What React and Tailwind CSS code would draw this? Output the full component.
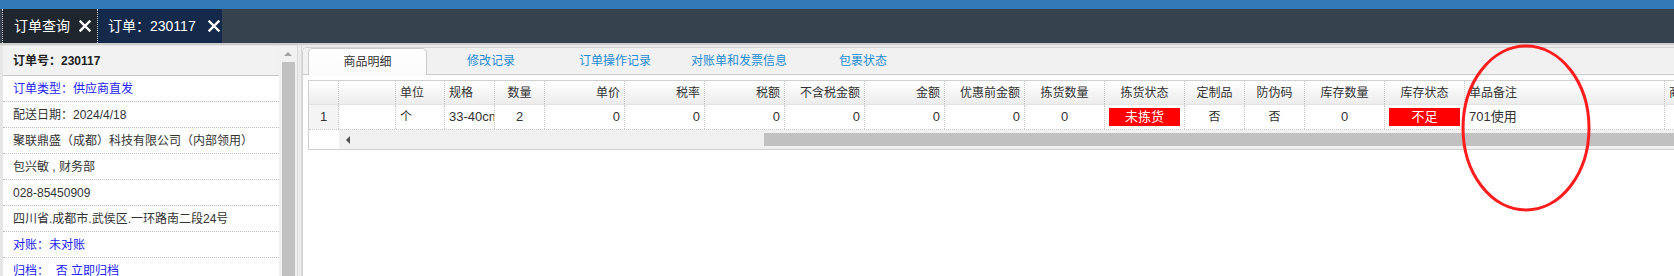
import React from 'react';

const font = { fontFamily: '"Liberation Sans", "Noto Sans CJK SC", sans-serif' };

// width, header, value, align
const cols = [
    { w: 'w-[30px]', h: '', v: '1', a: 'justify-center', num: true },
    { w: 'w-[57px]', h: '', v: '', a: 'justify-start' },
    { w: 'w-[49px]', h: '单位', v: '个', a: 'justify-start' },
    { w: 'w-[50px]', h: '规格', v: '33-40cm', a: 'justify-start' },
    { w: 'w-[50px]', h: '数量', v: '2', a: 'justify-center' },
    { w: 'w-[80px]', h: '单价', v: '0', a: 'justify-end' },
    { w: 'w-[80px]', h: '税率', v: '0', a: 'justify-end' },
    { w: 'w-[80px]', h: '税额', v: '0', a: 'justify-end' },
    { w: 'w-[80px]', h: '不含税金额', v: '0', a: 'justify-end' },
    { w: 'w-[80px]', h: '金额', v: '0', a: 'justify-end' },
    { w: 'w-[80px]', h: '优惠前金额', v: '0', a: 'justify-end' },
    { w: 'w-[80px]', h: '拣货数量', v: '0', a: 'justify-center' },
    { w: 'w-[80px]', h: '拣货状态', v: '未拣货', a: 'justify-center', red: true },
    { w: 'w-[60px]', h: '定制品', v: '否', a: 'justify-center' },
    { w: 'w-[60px]', h: '防伪码', v: '否', a: 'justify-center' },
    { w: 'w-[80px]', h: '库存数量', v: '0', a: 'justify-center' },
    { w: 'w-[80px]', h: '库存状态', v: '不足', a: 'justify-center', red: true },
    { w: 'w-[200px]', h: '单品备注', v: '701使用', a: 'justify-start' },
    { w: 'w-[100px]', h: '商品编码', v: '', a: 'justify-start' },
];

const info = [
    { t: '订单类型：供应商直发', blue: true },
    { t: '配送日期：2024/4/18' },
    { t: '聚联鼎盛（成都）科技有限公司（内部领用）' },
    { t: '包兴敏 , 财务部' },
    { t: '028-85450909' },
    { t: '四川省.成都市.武侯区.一环路南二段24号' },
    { t: '对账：未对账', blue: true },
    { t: '归档：  否 立即归档', blue: true },
];

const tabs = ['商品明细', '修改记录', '订单操作记录', '对账单和发票信息', '包裹状态'];

function CloseIcon() {
    return (
        <svg width="12" height="12" viewBox="0 0 12 12" className="shrink-0">
            <path d="M1.5 1.5 L10.5 10.5 M10.5 1.5 L1.5 10.5" stroke="#fff" strokeWidth="2.4" strokeLinecap="square" />
        </svg>
    );
}

export default function App() {
    return (
        <div className="relative w-[1674px] h-[276px] overflow-hidden bg-[#ececec] flex flex-col" style={font}>
            {/* top strip */}
            <div className="h-[9px] bg-[#3479b7] shrink-0"></div>

            {/* page tabs */}
            <div className="h-[34px] bg-[#36424e] flex shrink-0 text-[14px] text-white">
                <div className="w-[96px] bg-[#20262d] flex items-center gap-[9px] pl-[11px] border-x border-dotted border-[#cfcfcf] ml-[2px]">
                    <span>订单查询</span>
                    <CloseIcon />
                </div>
                <div className="w-[124px] bg-[#152a4b] flex items-center pl-[10px] gap-[12px]">
                    <span>订单：230117</span>
                    <CloseIcon />
                </div>
            </div>
            <div className="h-[2px] bg-[#cdcdcd] shrink-0"></div>

            <div className="flex flex-1 min-h-0">
                {/* left info panel */}
                <div className="flex pl-[3px] pt-[1px] bg-[#e6e6e6]">
                    <div className="w-[276px] bg-white text-[12px] text-[#333]">
                        <div className="h-[30px] bg-[#f2f2f2] border-b border-[#c8c8c8] flex items-center pl-[10px] font-bold text-[#222]">
                            订单号：230117
                        </div>
                        {info.map((r, i) => (
                            <div
                                key={i}
                                className={`h-[26px] flex items-center pl-[10px] whitespace-pre border-b border-dotted border-[#bdbdbd] ${r.blue ? 'text-[#2222ee]' : 'text-[#333]'}`}
                            >
                                {r.t}
                            </div>
                        ))}
                    </div>
                    {/* scrollbar */}
                    <div className="w-[18px] bg-[#f1f1f1] flex flex-col items-center pt-[6px]">
                        <div className="w-0 h-0 border-x-[4px] border-x-transparent border-b-[4px] border-b-[#a3a3a3]"></div>
                        <div className="mt-[6px] w-[13px] flex-1 bg-[#c1c1c1]"></div>
                    </div>
                </div>

                {/* splitter */}
                <div className="w-[5px] bg-[#ececec] border-x border-[#dadada]"></div>

                {/* right panel */}
                <div className="flex-1 min-w-0 flex flex-col pt-[2px] bg-[#ececec]">
                    <div className="flex-1 flex flex-col bg-white border-l border-t border-[#d2d2d2] rounded-tl-[5px] overflow-hidden">
                        <div className="h-[27px] bg-[#f1f1f1] border-b border-[#cccccc] flex items-end pl-[5px] gap-[4px] text-[12px] shrink-0">
                            {tabs.map((t, i) =>
                                i === 0 ? (
                                    <div
                                        key={t}
                                        className="w-[119px] h-[27px] -mb-px bg-gradient-to-b from-white to-[#fafafa] border border-b-0 border-[#cccccc] rounded-t-[5px] flex items-center justify-center text-[#333]"
                                    >
                                        {t}
                                    </div>
                                ) : (
                                    <div key={t} className="w-[120px] h-[26px] flex items-center justify-center text-[#1e8bd2]">
                                        {t}
                                    </div>
                                )
                            )}
                        </div>

                        <div className="pl-[5px] pt-[5px] flex-1">
                            <div className="w-[2000px] border border-[#d0d0d0] text-[12px] text-[#333]">
                                {/* header */}
                                <div className="flex h-[24px] bg-gradient-to-b from-white to-[#ececec] border-b border-[#e2e2e2]">
                                    {cols.map((c, i) => (
                                        <div
                                            key={i}
                                            className={`${c.w} shrink-0 flex items-center px-[4px] whitespace-nowrap overflow-hidden border-r border-dotted border-[#c6c6c6] ${c.a}`}
                                        >
                                            {c.h}
                                        </div>
                                    ))}
                                </div>
                                {/* data row */}
                                <div className="flex h-[25px] border-b border-dotted border-[#c6c6c6]">
                                    {cols.map((c, i) => (
                                        <div
                                            key={i}
                                            className={`${c.w} shrink-0 flex items-center px-[4px] whitespace-nowrap overflow-hidden border-r border-dotted border-[#c6c6c6] ${c.num ? 'bg-[#f4f4f4] text-[13px]' : ''} ${c.a}`}
                                        >
                                            {c.red ? (
                                                <div className="w-full h-[18px] bg-[#ff0000] text-white flex items-center justify-center text-[13px]">
                                                    {c.v}
                                                </div>
                                            ) : (
                                                <span className={c.v.match(/^[0-9]/) ? 'text-[13px]' : ''}>{c.v}</span>
                                            )}
                                        </div>
                                    ))}
                                </div>
                                {/* horizontal scrollbar */}
                                <div className="flex h-[19px]">
                                    <div className="w-[30px] bg-white shrink-0"></div>
                                    <div className="flex-1 bg-[#f0f0f0] flex items-center">
                                        <div className="ml-[7px] w-0 h-0 border-y-[4px] border-y-transparent border-r-[4px] border-r-[#505050]"></div>
                                        <div className="ml-[414px] h-[13px] flex-1 bg-[#c1c1c1]"></div>
                                    </div>
                                </div>
                            </div>
                        </div>
                    </div>
                </div>
            </div>

            {/* red annotation */}
            <svg className="absolute left-[1458px] top-[42px]" width="140" height="176" viewBox="0 0 140 176">
                <ellipse cx="68" cy="86" rx="63" ry="82" fill="none" stroke="#ff1c1c" strokeWidth="3" />
            </svg>
        </div>
    );
}
